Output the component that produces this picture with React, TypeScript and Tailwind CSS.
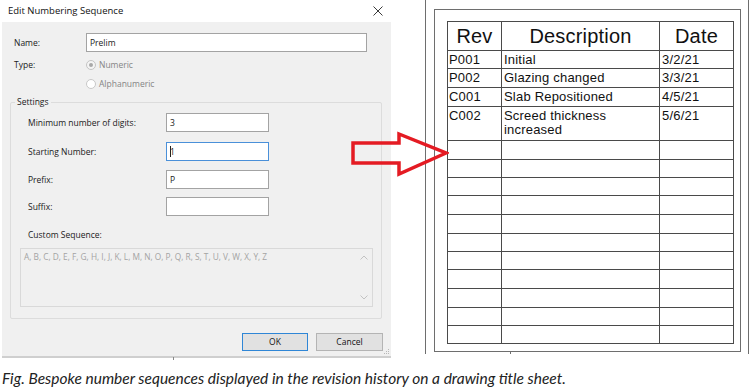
import React from "react";

const rows: { rev: string; desc: string[]; date: string; h: string }[] = [
  { rev: "P001", desc: ["Initial"], date: "3/2/21", h: "h-[18px]" },
  { rev: "P002", desc: ["Glazing changed"], date: "3/3/21", h: "h-[19px]" },
  { rev: "C001", desc: ["Slab Repositioned"], date: "4/5/21", h: "h-[19px]" },
  { rev: "C002", desc: ["Screed thickness", "increased"], date: "5/6/21", h: "h-[34px]" },
];

const emptyRows = [
  "h-[19px]",
  "h-[18px]",
  "h-[18px]",
  "h-[19px]",
  "h-[19px]",
  "h-[18px]",
  "h-[18px]",
  "h-[19px]",
  "h-[19px]",
  "h-[18px]",
  "h-[18px]",
];

function CloseIcon() {
  return (
    <svg width="10" height="10" viewBox="0 0 10 10" className="block">
      <path d="M0.5 0.5 L9.5 9.5 M9.5 0.5 L0.5 9.5" stroke="#3a3a3a" strokeWidth="1" fill="none" />
    </svg>
  );
}

function Input({ value, focused, caret }: { value?: string; focused?: boolean; caret?: boolean }) {
  return (
    <div
      className={
        "h-[19px] bg-white border flex items-center pl-[3px] text-[8.5px] text-[#1a1a1a] " +
        (focused ? "border-[#4a90d9]" : "border-[#a3a3a3]")
      }
    >
      {caret && <span className="w-px h-[11px] bg-[#222] mr-[-1px]" />}
      {value}
    </div>
  );
}

function Dialog() {
  return (
    <div className="w-[392px] h-[358px] shrink-0 flex flex-col font-['Open_Sans',sans-serif] text-[#1a1a1a]">
      <div className="h-[22px] flex items-center justify-between pl-[8px] pr-[9px]">
        <span className="text-[9.5px] leading-[12px] text-[#111]">Edit Numbering Sequence</span>
        <CloseIcon />
      </div>
      <div className="relative flex-1 ml-[2px] mr-[1px] bg-[#f0f0f0] border-b-2 border-[#cfcfcf] flex flex-col text-[8.5px] leading-[12px]">
        {/* Name */}
        <div className="flex items-center pt-[11px] pl-[12px]">
          <span className="w-[72px]">Name:</span>
          <div className="w-[281px]">
            <Input value="Prelim" />
          </div>
        </div>
        {/* Type */}
        <div className="flex pl-[12px] mt-[3px]">
          <span className="w-[72px] leading-[19px]">Type:</span>
          <div className="flex flex-col text-[#858585]">
            <div className="h-[19px] flex items-center gap-[3px]">
              <span className="w-[10px] h-[10px] rounded-full border border-[#c4c4c4] bg-[#f4f4f4] flex items-center justify-center">
                <span className="w-[4px] h-[4px] rounded-full bg-[#a8a8a8]" />
              </span>
              <span>Numeric</span>
            </div>
            <div className="h-[19px] flex items-center gap-[3px]">
              <span className="w-[10px] h-[10px] rounded-full border border-[#c8c8c8] bg-white" />
              <span>Alphanumeric</span>
            </div>
          </div>
        </div>
        {/* Settings */}
        <fieldset className="ml-[8px] w-[372px] mt-[3px] border border-[#dcdcdc] rounded-[2px] pb-[11px]">
          <legend className="ml-[4px] px-[2px] leading-[12px]">Settings</legend>
          <div className="flex flex-col pl-[17px] pt-[5px]">
            <div className="flex items-center">
              <span className="w-[138px]">Minimum number of digits:</span>
              <div className="w-[103px]">
                <Input value="3" />
              </div>
            </div>
            <div className="flex items-center mt-[10px]">
              <span className="w-[138px]">Starting Number:</span>
              <div className="w-[103px]">
                <Input value="1" focused caret />
              </div>
            </div>
            <div className="flex items-center mt-[9px]">
              <span className="w-[138px]">Prefix:</span>
              <div className="w-[103px]">
                <Input value="P" />
              </div>
            </div>
            <div className="flex items-center mt-[8px]">
              <span className="w-[138px]">Suffix:</span>
              <div className="w-[103px]">
                <Input />
              </div>
            </div>
            <span className="mt-[13px]">Custom Sequence:</span>
          </div>
          <div className="ml-[9px] mt-[7px] w-[353px] h-[59px] border border-[#d9d9d9] bg-[#f0f0f0] flex">
            <div className="flex-1 pl-[3px] pt-[2px] text-[#a3a3a3] text-[8.3px] leading-[12px]">
              A, B, C, D, E, F, G, H, I, J, K, L, M, N, O, P, Q, R, S, T, U, V, W, X, Y, Z
            </div>
            <div className="w-[17px] flex flex-col justify-between items-center py-[6px]">
              <svg width="8" height="5" viewBox="0 0 8 5">
                <path d="M0.5 4.5 L4 1 L7.5 4.5" stroke="#c2c2c2" fill="none" strokeWidth="1" />
              </svg>
              <svg width="8" height="5" viewBox="0 0 8 5">
                <path d="M0.5 0.5 L4 4 L7.5 0.5" stroke="#c2c2c2" fill="none" strokeWidth="1" />
              </svg>
            </div>
          </div>
        </fieldset>
        {/* Buttons */}
        <div className="flex justify-end gap-[8px] pr-[8px] mt-[14px]">
          <button className="w-[66px] h-[18px] bg-[#e1e1e1] border border-[#2f86d6] text-[8.5px] text-[#111] flex items-center justify-center">
            OK
          </button>
          <button className="w-[67px] h-[18px] bg-[#e1e1e1] border border-[#b4b4b4] text-[8.5px] text-[#111] flex items-center justify-center">
            Cancel
          </button>
        </div>
        <svg width="6" height="6" viewBox="0 0 6 6" className="absolute right-[1px] bottom-[1px]">
          <rect x="4" y="0" width="1" height="1" fill="#b8b8b8" />
          <rect x="2" y="2" width="1" height="1" fill="#b8b8b8" />
          <rect x="4" y="2" width="1" height="1" fill="#b8b8b8" />
          <rect x="0" y="4" width="1" height="1" fill="#b8b8b8" />
          <rect x="2" y="4" width="1" height="1" fill="#b8b8b8" />
          <rect x="4" y="4" width="1" height="1" fill="#b8b8b8" />
        </svg>
        <span className="absolute left-[171px] bottom-[-4px] w-px h-[3px] bg-[#888]" />
      </div>
    </div>
  );
}

function Sheet() {
  return (
    <div className="ml-[33px] w-[324px] h-[354px] shrink-0 border-x border-[#6e6e6e] pl-[8px] pr-[7px]">
      <div className="relative mt-[9px] h-[343px] border border-[#6e6e6e] pl-[12px] pr-[6px] pt-[11px] font-['Liberation_Sans',Arial,sans-serif] text-[#111]">
        <div className="w-[287px] border-t border-l border-[#4a4a4a]">
          <div className="flex h-[29px] border-b border-[#4a4a4a] text-[20px] leading-[22px] tracking-[0.2px]">
            <div className="w-[54px] border-r border-[#4a4a4a] flex items-center justify-center">Rev</div>
            <div className="w-[158px] border-r border-[#4a4a4a] flex items-center justify-center">Description</div>
            <div className="w-[74px] border-r border-[#4a4a4a] flex items-center justify-center">Date</div>
          </div>
          {rows.map((r) => (
            <div key={r.rev} className={"flex border-b border-[#4a4a4a] text-[13px] leading-[14px] tracking-[0.2px] " + r.h}>
              <div className="w-[54px] border-r border-[#4a4a4a] pl-[1px] pt-[2px]">{r.rev}</div>
              <div className="w-[158px] border-r border-[#4a4a4a] pl-[2px] pt-[2px]">
                {r.desc.map((d) => (
                  <div key={d}>{d}</div>
                ))}
              </div>
              <div className="w-[74px] border-r border-[#4a4a4a] pl-[2px] pt-[2px]">{r.date}</div>
            </div>
          ))}
          {emptyRows.map((h, i) => (
            <div key={i} className={"flex border-b border-[#4a4a4a] " + h}>
              <div className="w-[54px] border-r border-[#4a4a4a]" />
              <div className="w-[158px] border-r border-[#4a4a4a]" />
              <div className="w-[74px] border-r border-[#4a4a4a]" />
            </div>
          ))}
        </div>
        <span className="absolute left-[75px] top-full w-px h-[3px] bg-[#6e6e6e]" />
      </div>
    </div>
  );
}

function Arrow() {
  return (
    <svg
      className="absolute left-[349px] top-[130px]"
      width="100"
      height="48"
      viewBox="349 130 100 48"
    >
      <polygon
        points="353,143 399,143 399,134 446,153 399,174 399,163 353,163"
        fill="none"
        stroke="#e41b23"
        strokeWidth="3.5"
        strokeLinejoin="miter"
      />
    </svg>
  );
}

export default function App() {
  return (
    <div className="relative w-[753px] h-[392px] bg-white overflow-hidden">
      <div className="flex h-[360px]">
        <Dialog />
        <Sheet />
      </div>
      <p className="pl-[2px] mt-[9px] italic text-[15.5px] leading-[18px] text-[#222] font-['Lato',sans-serif]">
        Fig. Bespoke number sequences displayed in the revision history on a drawing title sheet.
      </p>
      <Arrow />
    </div>
  );
}
